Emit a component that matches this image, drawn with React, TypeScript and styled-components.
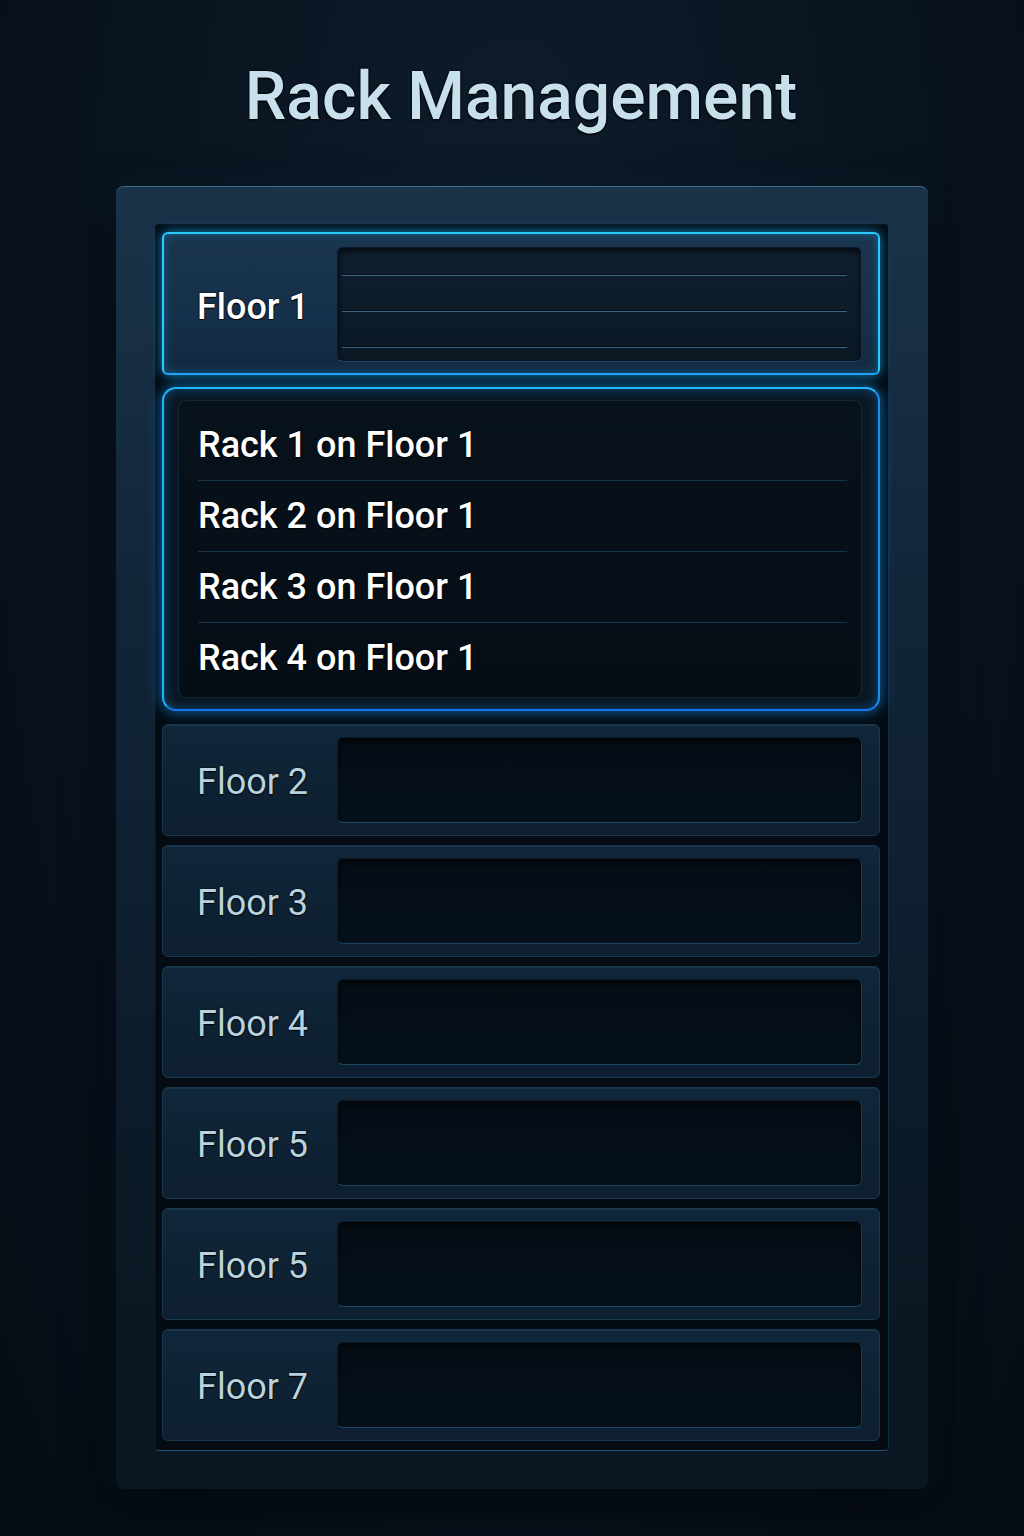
import * as React from 'react';
import styled, { createGlobalStyle } from 'styled-components';

const GlobalStyle = createGlobalStyle`
  html, body {
    margin: 0;
    padding: 0;
  }

  body {
    background: radial-gradient(ellipse at 50% 20%, #0e1c2a 0%, #0a1521 45%, #050c14 100%);
    font-family: Roboto, "Noto Sans", "Liberation Sans", sans-serif;
    min-height: 1536px;
  }
`;

const Page = styled.div`
  display: flex;
  flex-direction: column;
  padding-top: 64px;
  padding-bottom: 48px;
`;

const Title = styled.h1`
  color: #c8dfec;
  font-size: 66px;
  font-weight: 500;
  line-height: 1;
  margin: 0 0 56px 18px;
  text-align: center;
  text-shadow: 0 0 2px #000, 0 1px 2px #000, 0 0 1px #000;
`;

const Panel = styled.section`
  background: linear-gradient(180deg, #1a3349 0%, #12263a 30%, #0c1b29 70%, #0a1620 100%);
  border-radius: 8px;
  border-top: 1px solid #3f6d8e;
  box-shadow: 0 20px 50px rgba(0, 0, 0, 0.6), 0 0 30px rgba(30, 80, 120, 0.15);
  margin: 0 96px 0 116px;
  padding: 37px 39px 38px;
`;

const Well = styled.div`
  background: #040b12;
  border: 1px solid #071420;
  border-bottom-color: #1f5378;
  border-radius: 4px;
  border-right-color: #0f2f47;
  display: flex;
  flex-direction: column;
  gap: 9px;
  padding: 7px 8px 9px 6px;
`;

const FloorRow = styled.div<{ $active?: boolean }>`
  align-items: stretch;
  background: ${({ $active }) =>
    $active
      ? 'linear-gradient(180deg, #1a354d 0%, #15304a 60%, #132a40 100%)'
      : 'linear-gradient(180deg, #10263a 0%, #0d1f30 100%)'};
  border: ${({ $active }) => ($active ? '2px solid #2accff' : '1px solid #17384f')};
  border-bottom-color: ${({ $active }) => ($active ? '#1fa6f5' : '#17384f')};
  border-radius: 6px;
  box-shadow: ${({ $active }) =>
    $active
      ? '0 0 12px rgba(20, 180, 255, 0.75), inset 0 0 10px rgba(20, 160, 240, 0.4)'
      : 'inset 0 1px 0 rgba(90, 150, 190, 0.12)'};
  box-sizing: border-box;
  display: flex;
  height: ${({ $active }) => ($active ? '143px' : '112px')};
  padding: ${({ $active }) => ($active ? '13px 16px 11px 34px' : '12px 17px 12px 35px')};
`;

const FloorLabel = styled.span<{ $active?: boolean }>`
  align-self: center;
  color: ${({ $active }) => ($active ? '#ffffff' : '#b8d2df')};
  font-size: 36px;
  font-weight: ${({ $active }) => ($active ? 500 : 400)};
  margin-left: -1px;
  margin-top: 4px;
  text-shadow: 0 0 2px #000, 0 1px 1px #000;
  width: 140px;
`;

const Slot = styled.div`
  background: linear-gradient(180deg, #050d15 0%, #06111b 100%);
  border: 1px solid #0a1a27;
  border-bottom-color: #1b4664;
  border-radius: 6px;
  border-right-color: #17384f;
  box-shadow: inset 0 3px 6px rgba(0, 0, 0, 0.7);
  flex: 1;
`;

const LinedSlot = styled(Slot)`
  background: linear-gradient(180deg, #0e1f2e 0%, #0b1925 100%);
  display: flex;
  flex-direction: column;
  padding: 26px 14px 0 4px;
`;

const SlotLine = styled.div`
  border-bottom: 1px solid #3b6784;
  border-top: 1px solid #050c13;
  margin-bottom: 34px;
`;

const RackPanel = styled.div`
  background: #0a1723;
  border: 2px solid #1fb6f8;
  border-bottom-color: #1478ec;
  border-radius: 14px;
  border-right-color: #1a8ff0;
  box-shadow: 0 0 14px rgba(20, 150, 250, 0.75), inset 0 0 12px rgba(20, 150, 240, 0.4);
  margin: 3px 0 4px;
  padding: 11px 16px 11px 14px;
`;

const RackList = styled.ul`
  background: linear-gradient(180deg, #08121c 0%, #050d15 100%);
  border: 1px solid #14283a;
  border-radius: 8px;
  list-style: none;
  margin: 0;
  padding: 9px 14px 4px 19px;
`;

const RackItem = styled.li`
  align-items: center;
  border-bottom: 1px solid #17344a;
  color: #ffffff;
  display: flex;
  font-size: 36px;
  font-weight: 500;
  height: 70px;
  text-shadow: 0 0 2px #000, 0 1px 1px #000;

  &:last-child {
    border-bottom: none;
  }
`;

const floors = ['Floor 2', 'Floor 3', 'Floor 4', 'Floor 5', 'Floor 5', 'Floor 7'];
const racks = ['Rack 1 on Floor 1', 'Rack 2 on Floor 1', 'Rack 3 on Floor 1', 'Rack 4 on Floor 1'];

const App: React.FC = (): JSX.Element => (
  <>
    <GlobalStyle />
    <Page>
      <Title>Rack Management</Title>

      <Panel>
        <Well>
          <FloorRow $active>
            <FloorLabel $active>Floor 1</FloorLabel>
            <LinedSlot>
              <SlotLine />
              <SlotLine />
              <SlotLine />
            </LinedSlot>
          </FloorRow>

          <RackPanel>
            <RackList>
              {racks.map((rack) => (
                <RackItem key={rack}>{rack}</RackItem>
              ))}
            </RackList>
          </RackPanel>

          {floors.map((floor, i) => (
            <FloorRow key={i}>
              <FloorLabel>{floor}</FloorLabel>
              <Slot />
            </FloorRow>
          ))}
        </Well>
      </Panel>
    </Page>
  </>
);

export default App;
